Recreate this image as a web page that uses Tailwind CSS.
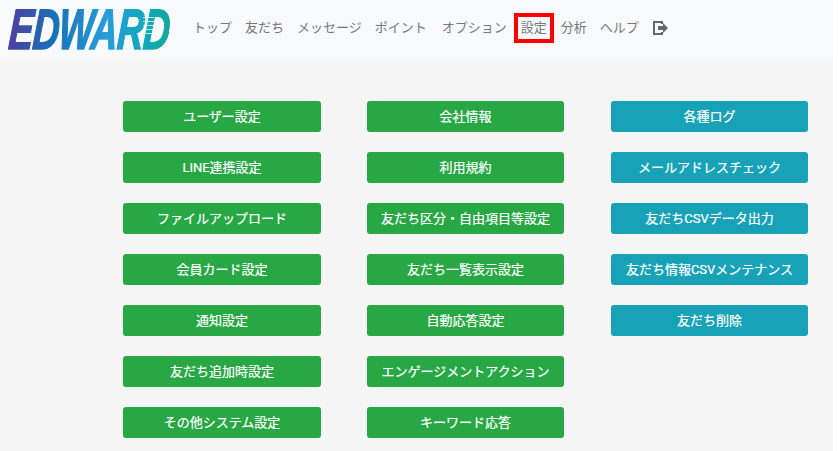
<!DOCTYPE html>
<html lang="ja">
<head>
    <meta charset="UTF-8">
    <title>EDWARD 設定</title>
    <script src="https://cdn.jsdelivr.net/npm/@tailwindcss/browser@4"></script>
</head>
<body class="bg-white font-['Roboto','Noto_Sans_CJK_JP',sans-serif]">
    <div class="w-[833px] h-[451px] overflow-hidden bg-[#f5f5f5]">

        <header class="h-[58px] bg-[#f8f9fb] flex items-center">
            <div class="relative w-[193px] shrink-0 h-[58px] pl-[9px] flex items-center">
                <span class="inline-block text-[57px] leading-none font-bold italic tracking-[-1px] origin-left scale-x-[0.65] -skew-x-6 [-webkit-text-stroke:1.5px_transparent] font-['Liberation_Sans',sans-serif] bg-[linear-gradient(90deg,#4f3f9f_0%,#1571b8_28%,#2a9bd8_60%,#0fa8c0_82%,#12a89a_100%)] bg-clip-text text-transparent">EDWARD</span>
                <div class="absolute left-[143px] top-[17px] w-[11px] flex flex-col gap-[3px]">
                    <div class="h-[1px] bg-white/70"></div>
                    <div class="h-[1px] bg-white/70"></div>
                    <div class="h-[1px] bg-white/70"></div>
                    <div class="h-[1px] bg-white/70"></div>
                    <div class="h-[1px] bg-white/70"></div>
                </div>
            </div>
            <nav class="flex items-center text-[13px] text-[#777] leading-none mb-[3px]">
                <a class="mr-[13px]">トップ</a>
                <a class="mr-[13px]">友だち</a>
                <a class="mr-[13px]">メッセージ</a>
                <a class="mr-[15px]">ポイント</a>
                <a class="mr-[7px]">オプション</a>
                <a class="border-[4px] border-[#f00] w-[40px] h-[30px] flex items-center justify-center mr-[7px]">設定</a>
                <a class="mr-[13px]">分析</a>
                <a class="mr-[14px]">ヘルプ</a>
                <svg class="w-[16px] h-[14px]" viewBox="0 0 16 14" fill="#666">
                    <path d="M0 0h10v3H8V2H2v10h6v-1h2v3H0z"/>
                    <path d="M5 5h5V2l5 5-5 5V9H5z"/>
                </svg>
            </nav>
        </header>

        <main class="pl-[123px] pt-[43px] grid grid-cols-[198px_197px_198px] gap-x-[46px] text-[13px] text-white text-center [-webkit-text-stroke:0.2px_white]">
            <div class="flex flex-col gap-[20px]">
                <a class="h-[31px] leading-[31px] rounded-[3px] bg-[#28a745]">ユーザー設定</a>
                <a class="h-[31px] leading-[31px] rounded-[3px] bg-[#28a745]">LINE連携設定</a>
                <a class="h-[31px] leading-[31px] rounded-[3px] bg-[#28a745]">ファイルアップロード</a>
                <a class="h-[31px] leading-[31px] rounded-[3px] bg-[#28a745]">会員カード設定</a>
                <a class="h-[31px] leading-[31px] rounded-[3px] bg-[#28a745]">通知設定</a>
                <a class="h-[31px] leading-[31px] rounded-[3px] bg-[#28a745]">友だち追加時設定</a>
                <a class="h-[31px] leading-[31px] rounded-[3px] bg-[#28a745]">その他システム設定</a>
            </div>
            <div class="flex flex-col gap-[20px]">
                <a class="h-[31px] leading-[31px] rounded-[3px] bg-[#28a745]">会社情報</a>
                <a class="h-[31px] leading-[31px] rounded-[3px] bg-[#28a745]">利用規約</a>
                <a class="h-[31px] leading-[31px] rounded-[3px] bg-[#28a745]">友だち区分・自由項目等設定</a>
                <a class="h-[31px] leading-[31px] rounded-[3px] bg-[#28a745]">友だち一覧表示設定</a>
                <a class="h-[31px] leading-[31px] rounded-[3px] bg-[#28a745]">自動応答設定</a>
                <a class="h-[31px] leading-[31px] rounded-[3px] bg-[#28a745]">エンゲージメントアクション</a>
                <a class="h-[31px] leading-[31px] rounded-[3px] bg-[#28a745]">キーワード応答</a>
            </div>
            <div class="flex flex-col gap-[20px] ml-[1px]">
                <a class="h-[31px] leading-[31px] rounded-[3px] bg-[#17a2b8]">各種ログ</a>
                <a class="h-[31px] leading-[31px] rounded-[3px] bg-[#17a2b8]">メールアドレスチェック</a>
                <a class="h-[31px] leading-[31px] rounded-[3px] bg-[#17a2b8]">友だちCSVデータ出力</a>
                <a class="h-[31px] leading-[31px] rounded-[3px] bg-[#17a2b8]">友だち情報CSVメンテナンス</a>
                <a class="h-[31px] leading-[31px] rounded-[3px] bg-[#17a2b8]">友だち削除</a>
            </div>
        </main>

    </div>
</body>
</html>
